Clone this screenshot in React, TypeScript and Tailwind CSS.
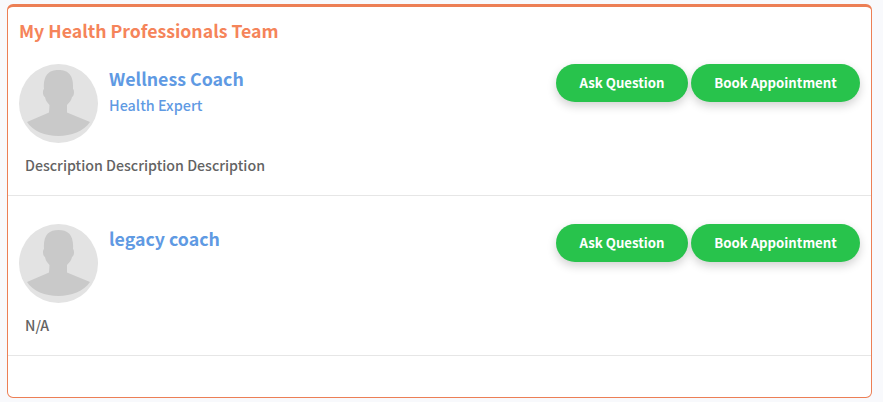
const font = "[font-family:'Noto_Sans_CJK_SC','Noto_Sans',sans-serif]";

function Avatar() {
  return (
    <svg width="79" height="79" viewBox="0 0 79 79" className="shrink-0">
      <circle cx="39.5" cy="39.5" r="39.5" fill="#e3e3e3" />
      <path
        d="M8 58 L30 48.5 L30.5 41 C28 38.5 26.5 36 26 33 C23.5 32 23.5 26 25 25 C24 11 30 6 39.5 6 C49 6 55 11 54 25 C55.5 26 55.5 32 53 33 C52.5 36 50.5 38.5 48 41 L48 48.5 L71 58 C65 67 52 72 39.5 72 C26 72 14 67 8 58 Z"
        fill="#c9c9c9"
      />
    </svg>
  );
}

function Btn({ label, w }: { label: string; w: string }) {
  return (
    <button
      className={`h-[38px] ${w} rounded-[19px] bg-[#28c34c] text-white text-[13.2px] font-bold shadow-[0_4px_10px_rgba(0,0,0,0.18)] flex items-center justify-center`}
    >
      {label}
    </button>
  );
}

function Row({ name, role, desc }: { name: string; role?: string; desc: string }) {
  return (
    <div className="h-[160px] border-b border-[#e6e6e6] px-[11px] flex flex-col">
      <div className="flex items-start justify-between pt-[28px]">
        <div className="flex gap-[11px]">
          <Avatar />
          <div className="flex flex-col pt-[1px]">
            <div className="text-[17.75px] leading-[26px] font-semibold text-[#5f9ae3]">{name}</div>
            <div className="text-[14.4px] leading-[22px] mt-[3px] font-medium text-[#5f9ae3]">{role}</div>
          </div>
        </div>
        <div className="flex gap-[3px]">
          <Btn label="Ask Question" w="w-[132px]" />
          <Btn label="Book Appointment" w="w-[169px]" />
        </div>
      </div>
      <div className="pl-[6px] mt-[11px] text-[14.2px] leading-[22px] font-medium text-[#636363]">{desc}</div>
    </div>
  );
}

export default function App() {
  return (
    <div className={`w-[883px] h-[402px] bg-[#f8f9fc] pt-[4px] pl-[7px] pr-[11px] ${font}`}>
      <div className="w-[865px] h-[394px] bg-white rounded-[6px] border border-[#ec7f55] border-t-[3px]">
        <div className="h-[29px] pl-[11px] pt-[9px] text-[17.7px] leading-[28px] font-semibold text-[#f5845a]">
          My Health Professionals Team
        </div>
        <Row name="Wellness Coach" role="Health Expert" desc="Description Description Description" />
        <Row name="legacy coach" desc="N/A" />
      </div>
    </div>
  );
}
